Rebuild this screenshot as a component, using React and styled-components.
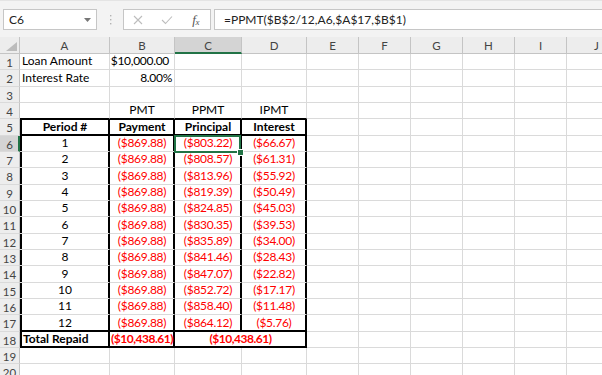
import React from 'react';
import styled, { createGlobalStyle, css } from 'styled-components';

const GRID = '#dadada';
const HEAD_BG = '#ededed';
const HEAD_LINE = '#c4c4c4';
const HEAD_SEL = '#d4d4d4';
const GREEN = '#217346';
const RED = '#ff0000';
const FONT = 'Lato, "Liberation Sans", sans-serif';

const GlobalStyle = createGlobalStyle`
  html, body { margin: 0; padding: 0; background: #fff; overflow: hidden; }
  body { font-family: ${FONT}; }
`;

const Screen = styled.div`
  width: 602px;
  height: 375px;
  overflow: hidden;
  display: flex;
  flex-direction: column;
`;

const FormulaBar = styled.div`
  flex: none;
  box-sizing: border-box;
  height: 37px;
  background: #f3f3f3;
  border-top: 1px solid #e4e4e4;
  display: flex;
  align-items: flex-start;
  padding: 8px 0 0 3px;
`;

const Box = styled.div`
  box-sizing: border-box;
  height: 21px;
  background: #fff;
  border: 1px solid #c6c6c6;
  display: flex;
  align-items: center;
`;

const NameBox = styled(Box)`
  width: 94px;
  justify-content: space-between;
  padding: 0 5px 0 5px;
  font-size: 12px;
  color: #222;
`;

const Grip = styled.div`
  width: 26px;
  height: 21px;
  display: flex;
  align-items: center;
  justify-content: center;
`;

const FxGroup = styled(Box)`
  width: 88px;
  padding-left: 0;
`;

const FxSlot = styled.div`
  width: 29px;
  height: 100%;
  display: flex;
  align-items: center;
  justify-content: center;
`;

const FxLabel = styled.span`
  font-family: "Liberation Serif", serif;
  font-style: italic;
  font-size: 13px;
  color: #555;
  letter-spacing: -0.5px;
  sub { font-size: 9px; vertical-align: -1px; }
`;

const FormulaInput = styled(Box)`
  flex: 1;
  margin-left: 3px;
  margin-right: -2px;
  padding-left: 9px;
  font-size: 12px;
  color: #222;
  white-space: nowrap;
`;

const Sheet = styled.div`
  flex: none;
  display: grid;
  grid-template-columns: 20px 90px 65px 67px 65px 52px 52px 52px 52px 52px 60px;
  grid-template-rows: 17px ${p => p.$rows};
`;

const HeadBase = styled.div`
  box-sizing: border-box;
  background: ${p => (p.$sel ? HEAD_SEL : HEAD_BG)};
  color: #444;
  font-size: 11.5px;
  display: flex;
  align-items: center;
  justify-content: center;
`;

const Corner = styled(HeadBase)`
  border-right: 1px solid ${HEAD_LINE};
  border-bottom: 1px solid ${HEAD_LINE};
  align-items: flex-end;
  justify-content: flex-end;
  padding: 0 2px 2px 0;
`;

const ColHead = styled(HeadBase)`
  border-right: 1px solid ${HEAD_LINE};
  border-bottom: ${p => (p.$sel ? `2px solid ${GREEN}` : `1px solid ${HEAD_LINE}`)};
  padding-top: ${p => (p.$sel ? 1 : 0)}px;
`;

const RowHead = styled(HeadBase)`
  border-right: ${p => (p.$sel ? `2px solid ${GREEN}` : `1px solid ${HEAD_LINE}`)};
  border-bottom: 1px solid ${GRID};
  padding-top: 1px;
  padding-left: ${p => (p.$sel ? 1 : 0)}px;
`;

const shadows = p => {
  const s = [];
  if (p.$r) s.push('inset -1px 0 0 #000');
  if (p.$b) s.push('inset 0 -1px 0 #000');
  if (p.$l) s.push('inset 2px 0 0 #000');
  if (p.$t) s.push('inset 0 1px 0 #000');
  return s.length ? s.join(', ') : 'none';
};

const Cell = styled.div`
  box-sizing: border-box;
  position: relative;
  min-width: 0;
  border-right: 1px solid ${p => (p.$r ? '#000' : GRID)};
  border-bottom: 1px solid ${p => (p.$b || p.$bk ? '#000' : GRID)};
  box-shadow: ${shadows};
  display: flex;
  align-items: flex-end;
  justify-content: ${p =>
    p.$align === 'center' ? 'center' : p.$align === 'right' ? 'flex-end' : 'flex-start'};
  padding: 0 ${p => p.$pr ?? 2}px 1px ${p => (p.$l ? 3 : 2)}px;
  font-size: 12px;
  line-height: 14px;
  font-weight: ${p => (p.$bold ? 700 : 400)};
  color: ${p => (p.$red ? RED : '#000')};
  letter-spacing: ${p => (p.$num ? (p.$bold ? '-0.5px' : '-0.3px') : 'normal')};
  white-space: nowrap;
  ${p => p.$span && css`grid-column: span ${p.$span};`}
  ${p =>
    p.$sel &&
    css`
      &::after {
        content: '';
        position: absolute;
        left: -1px;
        top: -1px;
        right: 0;
        bottom: -2px;
        border: 2px solid ${GREEN};
        z-index: 2;
        pointer-events: none;
      }
      &::before {
        content: '';
        position: absolute;
        right: -3px;
        bottom: -5px;
        width: 5px;
        height: 5px;
        background: ${GREEN};
        border: 1px solid #fff;
        z-index: 3;
      }
    `}
`;

const COLS = ['A', 'B', 'C', 'D', 'E', 'F', 'G', 'H', 'I', 'J'];
const ROW_H = [16, 17, 16, 16, 17, 16, 16, 17, 16, 16, 17, 16, 16, 17, 16, 16, 17, 16, 16, 17];

const principal = ['803.22', '808.57', '813.96', '819.39', '824.85', '830.35', '835.89', '841.46', '847.07', '852.72', '858.40', '864.12'];
const interest = ['66.67', '61.31', '55.92', '50.49', '45.03', '39.53', '34.00', '28.43', '22.82', '17.17', '11.48', '5.76'];

const tableCols = (rowCells, opts) =>
  rowCells.map((c, i) => ({
    ...c,
    l: i === 0,
    r: true,
    ...opts,
  }));

const buildRows = () => {
  const rows = [];
  rows.push([{ v: 'Loan Amount' }, { v: '$10,000.00', align: 'right', pr: 5, num: true }]);
  rows.push([{ v: 'Interest Rate' }, { v: '8.00%', align: 'right', num: true }]);
  rows.push([]);
  rows.push([
    { bk: true },
    { v: 'PMT', align: 'center', bk: true },
    { v: 'PPMT', align: 'center', bk: true },
    { v: 'IPMT', align: 'center', bk: true },
  ]);
  rows.push(
    tableCols(
      ['Period #', 'Payment', 'Principal', 'Interest'].map(v => ({ v, align: 'center', bold: true })),
      { t: true, b: true }
    )
  );
  for (let i = 0; i < 12; i++) {
    rows.push(
      tableCols(
        [
          { v: String(i + 1), align: 'center' },
          { v: '($869.88)', align: 'center', red: true, num: true },
          { v: `($${principal[i]})`, align: 'center', red: true, num: true, sel: i === 0 },
          { v: `($${interest[i]})`, align: 'center', red: true, num: true },
        ],
        i === 11 ? { b: true } : {}
      )
    );
  }
  rows.push([
    { v: 'Total Repaid', bold: true, l: true, r: true, b: true },
    { v: '($10,438.61)', bold: true, red: true, num: true, align: 'center', r: true, b: true },
    { v: '($10,438.61)', bold: true, red: true, num: true, align: 'center', r: true, b: true, span: 2 },
  ]);
  rows.push([]);
  rows.push([]);
  return rows;
};

const XIcon = () => (
  <svg width="10" height="10" viewBox="0 0 10 10">
    <path d="M1 1 L9 9 M9 1 L1 9" stroke="#bdbdbd" strokeWidth="1.1" fill="none" />
  </svg>
);

const CheckIcon = () => (
  <svg width="12" height="10" viewBox="0 0 12 10">
    <path d="M1 5 L4.5 8.5 L11 1.5" stroke="#bdbdbd" strokeWidth="1.1" fill="none" />
  </svg>
);

const Arrow = () => (
  <svg width="7" height="4" viewBox="0 0 7 4">
    <path d="M0 0 H7 L3.5 4 Z" fill="#777" />
  </svg>
);

const Dots = () => (
  <svg width="3" height="10" viewBox="0 0 3 10">
    <rect x="1" y="0" width="1.4" height="1.4" fill="#b3b3b3" />
    <rect x="1" y="4" width="1.4" height="1.4" fill="#b3b3b3" />
    <rect x="1" y="8" width="1.4" height="1.4" fill="#b3b3b3" />
  </svg>
);

const CornerTriangle = () => (
  <svg width="11" height="9" viewBox="0 0 11 9">
    <path d="M11 0 V9 H0 Z" fill="#bcbcbc" />
  </svg>
);

export default function App() {
  const rows = buildRows();
  return (
    <Screen>
      <GlobalStyle />
      <FormulaBar>
        <NameBox>
          <span>C6</span>
          <Arrow />
        </NameBox>
        <Grip>
          <Dots />
        </Grip>
        <FxGroup>
          <FxSlot><XIcon /></FxSlot>
          <FxSlot><CheckIcon /></FxSlot>
          <FxSlot><FxLabel>f<sub>x</sub></FxLabel></FxSlot>
        </FxGroup>
        <FormulaInput>=PPMT($B$2/12,A6,$A$17,$B$1)</FormulaInput>
      </FormulaBar>
      <Sheet $rows={ROW_H.map(h => `${h}px`).join(' ')}>
        <Corner>
          <CornerTriangle />
        </Corner>
        {COLS.map(c => (
          <ColHead key={c} $sel={c === 'C'}>
            {c}
          </ColHead>
        ))}
        {rows.map((cells, ri) => {
          let used = 0;
          const out = [
            <RowHead key={`h${ri}`} $sel={ri === 5}>
              {ri + 1}
            </RowHead>,
          ];
          cells.forEach((c, ci) => {
            used += c.span || 1;
            out.push(
              <Cell
                key={`c${ri}-${ci}`}
                $align={c.align}
                $bold={c.bold}
                $red={c.red}
                $num={c.num}
                $l={c.l}
                $r={c.r}
                $t={c.t}
                $b={c.b}
                $bk={c.bk}
                $pr={c.pr}
                $span={c.span}
                $sel={c.sel}
              >
                {c.v}
              </Cell>
            );
          });
          for (let k = used; k < COLS.length; k++) {
            out.push(<Cell key={`e${ri}-${k}`} />);
          }
          return out;
        })}
      </Sheet>
    </Screen>
  );
}
